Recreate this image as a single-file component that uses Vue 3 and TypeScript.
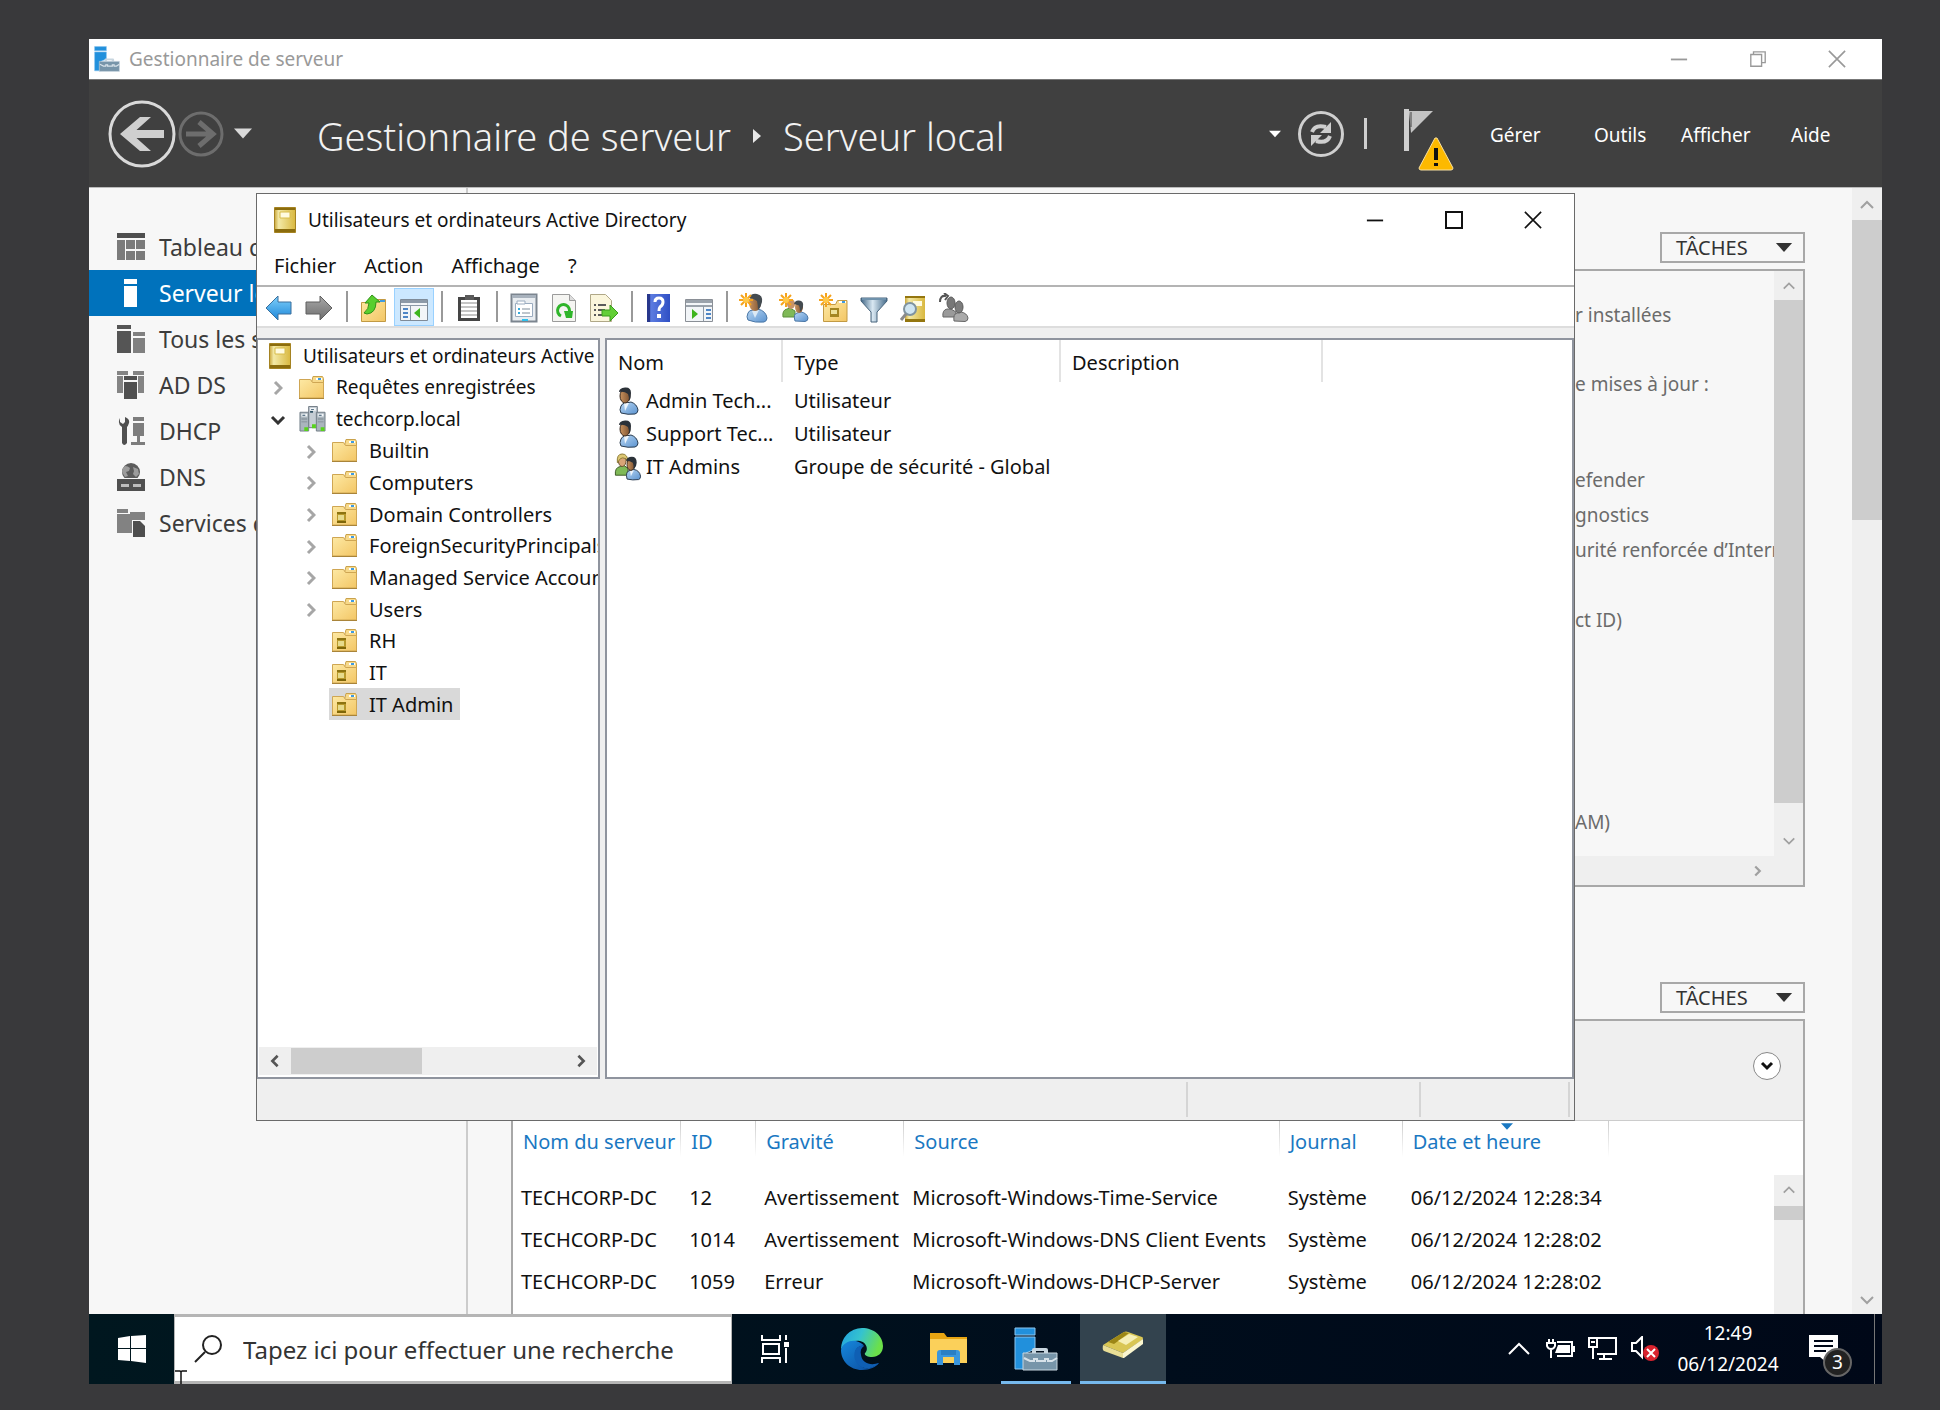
<script setup lang="ts">
interface NavItem { label: string; icon: string; active?: boolean }
interface Tool { icon: string; title: string; active?: boolean }
interface TreeNode { label: string; icon: string; level: number; state: 'open' | 'closed' | 'none'; selected?: boolean }
interface Entry { name: string; type: string; icon: string }
interface EventRow { server: string; id: number; level: string; source: string; log: string; date: string }

const navItems: NavItem[] = [
  { label: 'Tableau de bord', icon: 'dash' },
  { label: 'Serveur local', icon: 'local', active: true },
  { label: 'Tous les serveurs', icon: 'servers' },
  { label: 'AD DS', icon: 'adds' },
  { label: 'DHCP', icon: 'dhcp' },
  { label: 'DNS', icon: 'dns' },
  { label: 'Services de fichiers', icon: 'files' },
]
const menus: string[] = ['Gérer', 'Outils', 'Afficher', 'Aide']
const adMenus: string[] = ['Fichier', 'Action', 'Affichage', '?']

const toolGroups: Tool[][] = [
  [{ icon: 't-back', title: 'Précédent' }, { icon: 't-next', title: 'Suivant' }],
  [{ icon: 't-up', title: 'Dossier parent' }, { icon: 't-tree', title: 'Arborescence', active: true }],
  [{ icon: 't-clip', title: 'Copier' }],
  [{ icon: 't-props', title: 'Propriétés' }, { icon: 't-refresh', title: 'Actualiser' }, { icon: 't-export', title: 'Exporter' }],
  [{ icon: 't-help', title: 'Aide' }, { icon: 't-run', title: 'Volet' }],
  [
    { icon: 't-user', title: 'Nouvel utilisateur' }, { icon: 't-group', title: 'Nouveau groupe' },
    { icon: 't-ou', title: 'Nouvelle unité' }, { icon: 't-filter', title: 'Filtre' },
    { icon: 't-find', title: 'Rechercher' }, { icon: 't-member', title: 'Ajouter au groupe' },
  ],
]

const tree: TreeNode[] = [
  { label: 'Utilisateurs et ordinateurs Active Directory', icon: 'book', level: 0, state: 'none' },
  { label: 'Requêtes enregistrées', icon: 'folder', level: 1, state: 'closed' },
  { label: 'techcorp.local', icon: 'domain', level: 1, state: 'open' },
  { label: 'Builtin', icon: 'folder', level: 2, state: 'closed' },
  { label: 'Computers', icon: 'folder', level: 2, state: 'closed' },
  { label: 'Domain Controllers', icon: 'ou', level: 2, state: 'closed' },
  { label: 'ForeignSecurityPrincipals', icon: 'folder', level: 2, state: 'closed' },
  { label: 'Managed Service Accounts', icon: 'folder', level: 2, state: 'closed' },
  { label: 'Users', icon: 'folder', level: 2, state: 'closed' },
  { label: 'RH', icon: 'ou', level: 2, state: 'none' },
  { label: 'IT', icon: 'ou', level: 2, state: 'none' },
  { label: 'IT Admin', icon: 'ou', level: 2, state: 'none', selected: true },
]
const entries: Entry[] = [
  { name: 'Admin Tech...', type: 'Utilisateur', icon: 'user' },
  { name: 'Support Tec...', type: 'Utilisateur', icon: 'user' },
  { name: 'IT Admins', type: 'Groupe de sécurité - Global', icon: 'group' },
]
const propertyGroups: { cls: string; lines: string[] }[] = [
  { cls: 'g-installed', lines: ['r installées'] },
  { cls: 'g-update', lines: ['e mises à jour :'] },
  { cls: 'g-security', lines: ['efender', 'gnostics', 'urité renforcée d’Internet Explorer', '', 'ct ID)'] },
  { cls: 'g-memory', lines: ['AM)'] },
]
const columns: string[] = ['Nom du serveur', 'ID', 'Gravité', 'Source', 'Journal', 'Date et heure']
const events: EventRow[] = [
  { server: 'TECHCORP-DC', id: 12, level: 'Avertissement', source: 'Microsoft-Windows-Time-Service', log: 'Système', date: '06/12/2024 12:28:34' },
  { server: 'TECHCORP-DC', id: 1014, level: 'Avertissement', source: 'Microsoft-Windows-DNS Client Events', log: 'Système', date: '06/12/2024 12:28:02' },
  { server: 'TECHCORP-DC', id: 1059, level: 'Erreur', source: 'Microsoft-Windows-DHCP-Server', log: 'Système', date: '06/12/2024 12:28:02' },
]
</script>

<template>
  <div class="page">
    <svg class="defs" width="0" height="0" aria-hidden="true">
      <defs>
        <linearGradient id="gFold" x1="0" y1="0" x2="1" y2="1"><stop offset="0" stop-color="#fde9a4" /><stop offset="1" stop-color="#f3c665" /></linearGradient>
        <linearGradient id="gBook" x1="0" y1="0" x2="1" y2="0"><stop offset="0" stop-color="#c9a63a" /><stop offset=".2" stop-color="#f3e9a6" /><stop offset="1" stop-color="#d9b83f" /></linearGradient>
        <linearGradient id="gBlue" x1="0" y1="0" x2="0" y2="1"><stop offset="0" stop-color="#7fd0fb" /><stop offset="1" stop-color="#1d86d8" /></linearGradient>
        <linearGradient id="gGrey" x1="0" y1="0" x2="0" y2="1"><stop offset="0" stop-color="#a8a8a8" /><stop offset="1" stop-color="#6e6e6e" /></linearGradient>
        <linearGradient id="gShirt" x1="0" y1="0" x2="1" y2="1"><stop offset="0" stop-color="#b9d7f3" /><stop offset="1" stop-color="#5b93d0" /></linearGradient>
        <linearGradient id="gSkin" x1="0" y1="0" x2="1" y2="0"><stop offset="0" stop-color="#c9935f" /><stop offset="1" stop-color="#7d5230" /></linearGradient>
        <linearGradient id="gHelp" x1="0" y1="0" x2="1" y2="0"><stop offset="0" stop-color="#2b3f9c" /><stop offset=".2" stop-color="#5b7be0" /><stop offset="1" stop-color="#2f4fc4" /></linearGradient>
        <linearGradient id="gFun" x1="0" y1="0" x2="1" y2="0"><stop offset="0" stop-color="#3f6585" /><stop offset=".45" stop-color="#d9e8f2" /><stop offset="1" stop-color="#456b8a" /></linearGradient>
        <linearGradient id="gEdgeA" x1="0" y1="0" x2="1" y2=".3"><stop offset="0" stop-color="#1f9fe0" /><stop offset=".5" stop-color="#35c3cf" /><stop offset="1" stop-color="#6be04a" /></linearGradient>
        <linearGradient id="gEdgeB" x1="0" y1="0" x2="1" y2="1"><stop offset="0" stop-color="#1688dc" /><stop offset="1" stop-color="#0b4a9c" /></linearGradient>
      </defs>

      <symbol id="folder" viewBox="0 0 25 23"><path d="M14 .5h9.500l1 2v6H12z" fill="#f7d98a" stroke="#c9a24c" /><path d="M17 2h6v2h-6z" fill="#fff" /><path d="M19 2h3v2h-3z" fill="#3f9be0" /><path d="M.5 3.500h11l2 3h11v15.500H.5z" fill="url(#gFold)" stroke="#cfa653" /><path d="M0 22.500h25" stroke="#a9843a" /></symbol>
      <symbol id="ou" viewBox="0 0 25 23"><use href="#folder" width="25" height="23" /><path d="M5 9h9v11H5z" fill="#b8992b" /><path d="M5 9h9v2H5z" fill="#8d7310" /><path d="M6 12h6v5H6z" fill="#e7db8c" /><path d="M5 18h9v2H5z" fill="#7f6608" /></symbol>
      <symbol id="book" viewBox="0 0 22 26"><path d="M.5.5h21v25H.5z" fill="url(#gBook)" stroke="#a58322" /><path d="M1 1h20v2H1zM1 22h20v3H1z" fill="#8b6c0d" /><path d="M6 5h10v6H6z" fill="#fffbe0" stroke="#d8bc4a" /></symbol>
      <symbol id="domain" viewBox="0 0 27 27"><path d="M9.500.5h9v22h-9z" fill="#c5cdd4" stroke="#6f7a83" /><path d="M11 5h3v2h-3z" fill="#2e5063" /><path d="M.5 6.500h9v19.500h-9zM17.500 6.500h9v19.500h-9z" fill="#aab5bd" stroke="#717d86" /><path d="M2 8h6v3H2zM19 8h6v3h-6zM11 2h6v3h-6z" fill="#f4f7f9" /><path d="M3 9h3v1H3zM20 9h3v1h-3zM12 3h3v1h-3z" fill="#2e4f68" /><path d="M2 13h6v1H2zM19 13h6v1h-6zM2 16h6v1H2zM19 16h6v1h-6z" fill="#7c8890" /><path d="M5 22h4v4H5zM22 22h4v4h-4zM13 19h4v4h-4z" fill="#58d31c" /></symbol>
      <symbol id="user" viewBox="0 0 24 28"><path d="M5 26q-2-3 0-7 1-3 5-3l5-1q6 2 7 8 0 3-3 4-7 1-14-1z" fill="url(#gShirt)" stroke="#2a3c50" /><path d="M8 16l1 8 4-8z" fill="#eef5fb" /><ellipse cx="9" cy="9" rx="5" ry="7" fill="url(#gSkin)" stroke="#39281b" /><path d="M3 5q0-4 6-4.500Q15 0 15 6q0 5-2 8 0-5-1-7-4-3-9-2z" fill="#2b3138" /></symbol>
      <symbol id="group" viewBox="0 0 28 29"><path d="M1 23q-1-8 5-9l4-1 4 3v7z" fill="#7fb957" stroke="#3c5a26" /><ellipse cx="8" cy="8" rx="4" ry="6" fill="#d9a577" stroke="#6b5230" /><path d="M3 10q-1-9 5-9t6 9l-2-4q-4-2-6 0z" fill="#dcc672" stroke="#8d7a35" /><path d="M13 27q-2-8 3-9l4-1q6 1 7 7 0 3-2 3.500-6 1-12-.5z" fill="url(#gShirt)" stroke="#2a3c50" /><path d="M16 18l1 6 3-6z" fill="#eef5fb" /><ellipse cx="17" cy="12" rx="4" ry="6" fill="url(#gSkin)" stroke="#39281b" /><path d="M12 8q1-4 6-4t5 6q0 4-3 7 0-5-1-7-3-2-7-2z" fill="#2b3138" /></symbol>
      <symbol id="star" viewBox="0 0 14 14"><path d="M7 0v14M0 7h14M2 2l10 10M12 2L2 12" stroke="#f5a31c" stroke-width="2" /><circle cx="7" cy="7" r="3" fill="#ffc84a" /></symbol>

      <symbol id="t-back" viewBox="0 0 30 30"><path d="M2 15L14 3v6h13v12H14v6z" fill="url(#gBlue)" stroke="#3a6f9c" /></symbol>
      <symbol id="t-next" viewBox="0 0 30 30"><path d="M28 15L16 3v6H2v12h14v6z" fill="url(#gGrey)" stroke="#5e5e5e" /></symbol>
      <symbol id="t-up" viewBox="0 0 30 30"><path d="M2.500 9.500h12l3-3h9v22h-24z" fill="url(#gFold)" stroke="#c29a44" /><path d="M21 7h5v2h-5z" fill="#3f9be0" /><path d="M5 20q5-4 5-10H6l7-8 8 7h-4q0 11-9 12z" fill="#58cf2e" stroke="#2f9216" /></symbol>
      <symbol id="t-tree" viewBox="0 0 30 30"><path d="M1.500 6.500h27v21h-27z" fill="#f2f5f8" stroke="#7f8b98" /><path d="M2 7h26v3H2zM2 12h26v1H2z" fill="#8c99a8" /><path d="M11 13h1v14h-1z" fill="#8c99a8" /><path d="M4 15h5v2H4zM4 19h5v2H4zM4 23h5v2H4z" fill="#4f86c6" /><path d="M21 15v10l-6-5z" fill="#3fb51f" /></symbol>
      <symbol id="t-clip" viewBox="0 0 30 30"><path d="M4 4h22v24H4z" fill="#454545" /><path d="M7 7h16v18H7z" fill="#fff" /><path d="M11 2h9v5h-9z" fill="#5b5b5b" /><path d="M7 10h16M7 14h16M7 18h16M7 22h16" stroke="#8b8b8b" /></symbol>
      <symbol id="t-props" viewBox="0 0 30 30"><path d="M2.500 1.500h25v27h-25z" fill="#e9edf1" stroke="#7c858f" stroke-width="2" /><path d="M3 2h24v3H3z" fill="#a8b2bd" /><path d="M6.500 10.500h17v13h-17z" fill="#fff" stroke="#9aabbf" /><path d="M8 8h8v3H8z" fill="#fff" stroke="#9aabbf" /><path d="M9 15h2v2H9zM9 19h2v2H9z" fill="#33a9dc" /><path d="M13 16h8M13 20h8" stroke="#7f8d9b" /><path d="M13 26h6v2h-6z" fill="#2ec1ee" /></symbol>
      <symbol id="t-refresh" viewBox="0 0 30 30"><path d="M3.500 1.500h17l6 6v21h-23z" fill="#f5f5f2" stroke="#9b9b9b" /><path d="M20.500 1.500v6h6" fill="#ddd" stroke="#9b9b9b" /><path d="M12 23a6 6 0 1 1 8-3" fill="none" stroke="#2fb52a" stroke-width="3" /><path d="M15 18h9l-1 7h-6z" fill="#2fb52a" /></symbol>
      <symbol id="t-export" viewBox="0 0 30 30"><path d="M1.500 1.500h15l6 6v21h-21z" fill="#fbf6dc" stroke="#b0a888" /><path d="M5 12h2M5 17h2M5 22h2M9 12h8M9 17h7M9 22h7" stroke="#5b5b5b" stroke-width="2" /><path d="M13 17h8v-5l8 8-8 8v-5h-8z" fill="#63cf37" stroke="#3a9d1d" /></symbol>
      <symbol id="t-help" viewBox="0 0 30 30"><path d="M3 1h23v28H3z" fill="url(#gHelp)" /><path d="M3 1h3v28H3z" fill="#27378c" /><path d="M11 9q0-4 4-4t4 4q0 3-3 5-1 1-1 4" fill="none" stroke="#fff" stroke-width="3" /><path d="M13 21h4v4h-4z" fill="#fff" /></symbol>
      <symbol id="t-run" viewBox="0 0 30 30"><path d="M1.500 6.500h27v22h-27z" fill="#f2f5f8" stroke="#8a8f96" /><path d="M2 7h26v3H2zM2 12h26v2H2z" fill="#9aa2ab" /><path d="M19 13h1v15h-1z" fill="#8c99a8" /><path d="M22 16h5v2h-5zM22 20h5v2h-5zM22 24h5v2h-5z" fill="#4f86c6" /><path d="M8 16v10l6-5z" fill="#3fb51f" /></symbol>
      <symbol id="t-user" viewBox="0 0 30 30"><path d="M9 27q-2-3 0-7 1-3 5-3l5-1q8 2 9 9 0 3-3 4-9 1-16-2z" fill="url(#gShirt)" stroke="#4a76a5" /><path d="M13 18l3 7 4-8z" fill="#dbe9f5" /><ellipse cx="16" cy="10" rx="6" ry="8" fill="url(#gSkin)" /><path d="M10 5q2-5 8-4 6 1 5 8-1 5-4 8 0-5-1-9-4-3-8-3z" fill="#444b50" /><use href="#star" width="14" height="14" /></symbol>
      <symbol id="t-group" viewBox="0 0 30 30"><path d="M4 24q-1-7 4-8l3-1 5 3v6z" fill="#7fb957" stroke="#5d8f3c" /><ellipse cx="12" cy="11" rx="4" ry="5" fill="#c99468" /><path d="M16 28q-2-7 2-8l4-1q6 1 7 6 0 3-3 3.500z" fill="url(#gShirt)" stroke="#4a76a5" /><ellipse cx="20" cy="14" rx="4" ry="6" fill="url(#gSkin)" /><path d="M15 11q1-4 5-3.500 5 .5 4 6-1 4-3 5 0-4-1-6-2-1-5-1.500z" fill="#444b50" /><use href="#star" width="14" height="14" /></symbol>
      <symbol id="t-ou" viewBox="0 0 30 30"><path d="M4.500 11.500h12l2-4h9.500v21h-23.500z" fill="url(#gFold)" stroke="#c29a44" /><path d="M20 8h7v2h-7z" fill="#fff" /><path d="M23 8h3v2h-3z" fill="#3f9be0" /><path d="M11 15h9v9h-9z" fill="#a48621" /><path d="M12 17h6v4h-6z" fill="#ede19a" /><use href="#star" width="14" height="14" /></symbol>
      <symbol id="t-filter" viewBox="0 0 30 30"><path d="M2 5h26v3L18 19v10h-6V19L2 8z" fill="url(#gFun)" stroke="#48657d" /><path d="M3 5h24v2H3z" fill="#6f92ac" /></symbol>
      <symbol id="t-find" viewBox="0 0 30 30"><path d="M6 3h20v26H6z" fill="url(#gBook)" /><path d="M6 3h20v2H6zM6 26h20v3H6z" fill="#94760f" /><path d="M14 8h9v5h-9z" fill="#fffbe0" /><circle cx="11" cy="16" r="6" fill="#cfe5f2" stroke="#7f93a0" stroke-width="2" /><path d="M7 21l-5 6" stroke="#8a8a8a" stroke-width="3" /></symbol>
      <symbol id="t-member" viewBox="0 0 30 30"><path d="M1 9q0-7 6-6M5 0l4 3-3 4" fill="none" stroke="#555" stroke-width="2" /><path d="M4 24q-1-7 4-8h4l5 3v5z" fill="#9a9a9a" stroke="#666" /><ellipse cx="12" cy="10" rx="4" ry="6" fill="#777" stroke="#5a5a5a" /><path d="M15 28q-1-7 3-8l4-1q6 1 7 6 0 3-3 3.500z" fill="#aaa" stroke="#666" /><ellipse cx="20" cy="14" rx="4" ry="6" fill="#7c7c7c" stroke="#5a5a5a" /></symbol>

      <symbol id="dash" viewBox="0 0 28 28"><path d="M0 0h28v5H0z" fill="#4f4f4f" /><path d="M0 7h8v20H0zM9 7h9v9H9zM19 7h9v9h-9zM9 18h9v9H9zM19 18h9v9h-9z" fill="#7b7b7b" /></symbol>
      <symbol id="local" viewBox="0 0 28 28"><path d="M7 0h13v5H7zM7 7h13v21H7z" fill="#fff" /></symbol>
      <symbol id="servers" viewBox="0 0 28 28"><path d="M0 0h14v4H0zM0 6h14v22H0z" fill="#555" /><path d="M16 7h12v4H16zM16 13h12v15H16z" fill="#808080" /></symbol>
      <symbol id="adds" viewBox="0 0 28 28"><path d="M0 0h11v4H0zM0 5h6v17H0zM16 0h11v4H16zM21 5h6v17h-6z" fill="#848484" /><path d="M7 5h13v4H7zM7 11h13v17H7z" fill="#505050" /></symbol>
      <symbol id="dhcp" viewBox="0 0 28 28"><path d="M3 1v4l3 2 2-2V0q5 2 4 6-1 3-2 4v16q-3 4-5 0V10Q0 7 3 1z" fill="#505050" /><path d="M16 0h11v4H16zM16 6h11v13H16zM20 19h3v6h-3zM14 25h14v3H14z" fill="#7d7d7d" /></symbol>
      <symbol id="dns" viewBox="0 0 28 28"><circle cx="14" cy="9" r="9" fill="#5c5c5c" /><path d="M8 3q3 0 5 2l-1 3-3 1 2 4-3 1-3-5q0-4 3-6zM16 4l5 2 1 5-3 3-3-3 1-3z" fill="#9c9c9c" /><path d="M0 16h28v12H0z" fill="#505050" /><path d="M0 15.500h28" stroke="#f7f7f7" /><path d="M4 21h8v3H4zM16 21h8v3h-8z" fill="#bdbdbd" /></symbol>
      <symbol id="files" viewBox="0 0 28 28"><path d="M0 0h11v4H0zM0 5h13V3h15v8H15v13H0z" fill="#828282" /><path d="M16 12h7l5 5v11H16z" fill="#4e4e4e" /></symbol>

      <symbol id="toolbox" viewBox="0 0 44 44"><path d="M1 1h20v7H1zM1 10h20v12l-9 4v16H1z" fill="#2190dc" /><path d="M1 1h20v7H1zM1 10h20v12l-9 4v16H1z" fill="none" stroke="#8cc6f0" /><path d="M18 26v-3q0-2 2-2h12q2 0 2 2v3h-4v-2h-8v2z" fill="#c8d6df" /><path d="M9 26h34v17H9z" fill="#7795a9" stroke="#c8d6df" /><path d="M10 31l6 3h4v-2h3v2h8v-2h3v2h4l5-3" fill="none" stroke="#d7e2e9" stroke-width="2" /></symbol>
      <symbol id="c-up" viewBox="0 0 16 10"><path d="M2 8l6-6 6 6" fill="none" stroke="currentColor" stroke-width="2" /></symbol>
      <symbol id="c-down" viewBox="0 0 16 10"><path d="M2 2l6 6 6-6" fill="none" stroke="currentColor" stroke-width="2" /></symbol>
      <symbol id="c-right" viewBox="0 0 10 16"><path d="M2 2l6 6-6 6" fill="none" stroke="currentColor" stroke-width="3" /></symbol>
      <symbol id="c-left" viewBox="0 0 10 16"><path d="M8 2L2 8l6 6" fill="none" stroke="currentColor" stroke-width="3" /></symbol>
      <symbol id="w-min" viewBox="0 0 20 20"><path d="M1 10.500h18" stroke="currentColor" stroke-width="2" /></symbol>
      <symbol id="w-max" viewBox="0 0 20 20"><path d="M2 2h16v16H2z" fill="none" stroke="currentColor" stroke-width="2" /></symbol>
      <symbol id="w-restore" viewBox="0 0 20 20"><path d="M2 5h12v13H2zM5 5V2h13v12h-4" fill="none" stroke="currentColor" stroke-width="1.500" /></symbol>
      <symbol id="w-close" viewBox="0 0 20 20"><path d="M1 1l18 18M19 1L1 19" stroke="currentColor" stroke-width="1.800" /></symbol>
      <symbol id="caret" viewBox="0 0 18 10"><path d="M0 0h18l-9 10z" fill="currentColor" /></symbol>
    </svg>

    <div class="screen">
      <main class="manager">
        <div class="titlebar">
          <svg class="title-icon" width="26" height="26"><use href="#toolbox" /></svg>
          <span class="title-text">Gestionnaire de serveur</span>
          <div class="win-buttons faded">
            <button type="button" aria-label="Réduire"><svg width="18" height="18"><use href="#w-min" /></svg></button>
            <button type="button" aria-label="Restaurer"><svg width="18" height="18"><use href="#w-restore" /></svg></button>
            <button type="button" aria-label="Fermer"><svg width="18" height="18"><use href="#w-close" /></svg></button>
          </div>
        </div>

        <header class="banner">
          <button type="button" class="nav-back" aria-label="Précédent">
            <svg width="68" height="68" viewBox="0 0 68 68" fill="none"><circle cx="34" cy="34" r="32" stroke="#d9d9d9" stroke-width="3" /><path d="M24 34h32" stroke="#cfcfcf" stroke-width="8" /><path d="M12 34l20-17h11L24 34l19 17H32z" fill="#cfcfcf" /></svg>
          </button>
          <button type="button" class="nav-next" aria-label="Suivant">
            <svg width="46" height="46" viewBox="0 0 46 46" fill="none"><circle cx="23" cy="23" r="21" stroke="#6d6d6d" stroke-width="3" /><path d="M8 23h26M21 11l14 12-14 12" stroke="#6d6d6d" stroke-width="5" /></svg>
          </button>
          <button type="button" class="nav-list" aria-label="Historique"><svg width="18" height="11"><use href="#caret" /></svg></button>
          <h1 class="crumbs">Gestionnaire de serveur <svg class="crumb-arrow" width="8" height="14" viewBox="0 0 8 14"><path d="M0 0l8 7-8 7z" fill="#e8e8e8" /></svg> Serveur local</h1>
          <div class="banner-right">
            <svg width="12" height="8"><use href="#caret" /></svg>
            <button type="button" class="refresh" aria-label="Actualiser">
              <svg width="46" height="46" viewBox="0 0 46 46" fill="none"><circle cx="23" cy="23" r="21.500" stroke="#cfcfcf" stroke-width="3" /><path d="M14 21q3-8 14-5M32 25q-3 8-14 5" stroke="#cfcfcf" stroke-width="4" /><path d="M33 11v11H22zM13 35V24h11z" fill="#cfcfcf" /></svg>
            </button>
            <span class="bar"></span>
            <button type="button" class="flag" aria-label="Notifications">
              <svg width="54" height="64" viewBox="0 0 54 64"><path d="M2 1h5v42H2z" fill="#cfcfcf" /><path d="M7 3h24L9 25z" fill="#c4c4c4" /><path d="M9 4v15" stroke="#404040" /><path d="M35 30l16 30q0 2-2 2H19q-2 0-2-2l16-30z" fill="#fdb900" stroke="#f7dfa0" /><path d="M34 40v12M34 55v3" stroke="#111" stroke-width="4" /></svg>
            </button>
            <nav class="menu">
              <button v-for="m in menus" :key="m" type="button">{{ m }}</button>
            </nav>
          </div>
        </header>

        <div class="body">
          <nav class="sidebar">
            <a v-for="n in navItems" :key="n.label" href="#" class="nav-item" :class="{ active: n.active }">
              <svg width="28" height="28"><use :href="'#' + n.icon" /></svg>{{ n.label }}
            </a>
          </nav>

          <div class="content">
            <button type="button" class="tasks">TÂCHES<svg width="18" height="9"><use href="#caret" /></svg></button>
            <section class="properties">
              <div class="prop-row">
                <div class="prop-text">
                  <div v-for="g in propertyGroups" :key="g.cls" :class="g.cls">
                    <p v-for="(l, i) in g.lines" :key="i">{{ l }}</p>
                  </div>
                </div>
                <div class="vscroll">
                  <svg width="14" height="10"><use href="#c-up" /></svg>
                  <div class="thumb"></div>
                  <svg class="low" width="14" height="10"><use href="#c-down" /></svg>
                </div>
              </div>
              <div class="hscroll"><svg width="9" height="12"><use href="#c-right" /></svg></div>
            </section>

            <button type="button" class="tasks second">TÂCHES<svg width="18" height="9"><use href="#caret" /></svg></button>
            <section class="events">
              <div class="events-head">
                <button type="button" class="expand" aria-label="Développer"><svg width="14" height="10" viewBox="0 0 14 10"><path d="M2 2l5 5 5-5" fill="none" stroke="#111" stroke-width="3" /></svg></button>
              </div>
              <div class="events-body">
                <table>
                  <colgroup><col class="c1" /><col class="c2" /><col class="c3" /><col class="c4" /><col class="c5" /><col class="c6" /></colgroup>
                  <thead>
                    <tr><th v-for="c in columns" :key="c" scope="col">{{ c }}<svg v-if="c === 'Date et heure'" class="sort" width="12" height="7"><use href="#caret" /></svg></th></tr>
                  </thead>
                  <tbody>
                    <tr v-for="e in events" :key="e.id">
                      <td>{{ e.server }}</td><td>{{ e.id }}</td><td>{{ e.level }}</td><td>{{ e.source }}</td><td>{{ e.log }}</td><td>{{ e.date }}</td>
                    </tr>
                  </tbody>
                </table>
                <div class="vscroll small">
                  <svg width="14" height="10"><use href="#c-up" /></svg>
                  <div class="thumb"></div>
                </div>
              </div>
            </section>
          </div>

          <div class="vscroll page-scroll">
            <svg width="16" height="10"><use href="#c-up" /></svg>
            <div class="thumb"></div>
            <svg class="low" width="16" height="10"><use href="#c-down" /></svg>
          </div>
        </div>
      </main>

      <section class="ad" aria-label="Utilisateurs et ordinateurs Active Directory">
        <div class="ad-title">
          <svg width="22" height="26"><use href="#book" /></svg>
          <span>Utilisateurs et ordinateurs Active Directory</span>
          <div class="win-buttons">
            <button type="button" aria-label="Réduire"><svg width="18" height="18"><use href="#w-min" /></svg></button>
            <button type="button" aria-label="Agrandir"><svg width="20" height="20"><use href="#w-max" /></svg></button>
            <button type="button" aria-label="Fermer"><svg width="18" height="18"><use href="#w-close" /></svg></button>
          </div>
        </div>
        <div class="ad-menu"><button v-for="m in adMenus" :key="m" type="button">{{ m }}</button></div>
        <div class="toolbar">
          <div v-for="(g, i) in toolGroups" :key="i" class="tool-group">
            <button v-for="t in g" :key="t.icon" type="button" :aria-label="t.title" :class="{ on: t.active }"><svg width="30" height="30"><use :href="'#' + t.icon" /></svg></button>
          </div>
        </div>
        <div class="panes">
          <div class="tree">
            <ul>
              <li v-for="n in tree" :key="n.label" :class="['lv' + n.level, { selected: n.selected }]">
                <span v-if="n.level" class="twisty" :class="n.state">
                  <svg v-if="n.state === 'closed'" width="10" height="16"><use href="#c-right" /></svg>
                  <svg v-if="n.state === 'open'" width="16" height="10" viewBox="0 0 16 10"><path d="M2 2l6 6 6-6" fill="none" stroke="#333" stroke-width="3" /></svg>
                </span>
                <span class="node"><span class="node-icon"><svg :width="n.icon === 'domain' ? 27 : n.icon === 'book' ? 22 : 25" :height="n.icon === 'domain' || n.icon === 'book' ? 26 : 23"><use :href="'#' + n.icon" /></svg></span>{{ n.label }}</span>
              </li>
            </ul>
            <div class="tree-scroll">
              <svg width="10" height="14"><use href="#c-left" /></svg>
              <div class="thumb"></div>
              <svg width="10" height="14"><use href="#c-right" /></svg>
            </div>
          </div>
          <div class="list">
            <table>
              <colgroup><col class="l1" /><col class="l2" /><col class="l3" /></colgroup>
              <thead><tr><th scope="col">Nom</th><th scope="col">Type</th><th scope="col">Description</th></tr></thead>
              <tbody>
                <tr v-for="e in entries" :key="e.name">
                  <td><span class="entry"><svg width="28" height="28"><use :href="'#' + e.icon" /></svg>{{ e.name }}</span></td><td>{{ e.type }}</td><td></td>
                </tr>
              </tbody>
            </table>
          </div>
        </div>
        <div class="status"><span class="s1"></span><span class="s2"></span><span class="s3"></span></div>
      </section>

      <footer class="taskbar">
        <button type="button" class="start" aria-label="Démarrer">
          <svg width="28" height="28" viewBox="0 0 28 28"><path d="M0 3l12-2v12H0zM13 1l15-1v13H13zM0 14h12v12L0 25zM13 14h15v14l-15-2z" fill="#fff" /></svg>
        </button>
        <label class="search">
          <svg width="30" height="30" viewBox="0 0 30 30" fill="none" stroke="#222" stroke-width="2"><circle cx="19" cy="11" r="9" /><path d="M12 18L2 28" /></svg>
          <input type="text" placeholder="Tapez ici pour effectuer une recherche" aria-label="Rechercher" />
          <svg class="ibeam" width="12" height="14" viewBox="0 0 12 14"><path d="M0 1h5l1 1 1-1h5M6 2v12" fill="none" stroke="#111" stroke-width="1.500" /></svg>
        </label>
        <div class="apps">
          <button type="button" aria-label="Affichage des tâches">
            <svg width="30" height="30" viewBox="0 0 30 30" fill="none" stroke="#fff" stroke-width="2"><path d="M2 1v5h18V1M2 29v-5h18v5M3 10h16v10H3z" /><path d="M26 1v5M26 14v15" /><path d="M24 8h5v5h-5z" fill="#fff" stroke="none" /></svg>
          </button>
          <button type="button" aria-label="Microsoft Edge">
            <svg width="44" height="44" viewBox="0 0 44 44"><path d="M1 23A21 21 0 0 1 22 1c12 0 21 8 21 18 0 7-5 11-11 11-5 0-8-2-7-4 4-4 1-11-5-12C11 13 3 17 1 23z" fill="url(#gEdgeA)" /><path d="M1 23c2-7 9-10 15-9 4 1 7 3 8 5-5-1-9 3-9 9 0 9 9 16 17 12 3-1 6-4 7-4-3 4-9 7-17 7C10 43 1 34 1 23z" fill="url(#gEdgeB)" /><path d="M15 24c-3 9 4 19 15 17 4-1 7-3 9-5-9 3-17 0-18-8-1-4 0-7 3-9-4-1-8 1-9 5z" fill="#0f5fb4" /></svg>
          </button>
          <button type="button" aria-label="Explorateur de fichiers">
            <svg width="38" height="34" viewBox="0 0 38 34"><path d="M0 1h14l3 4h20v6H0z" fill="#e8a512" /><path d="M0 7h37v24H0z" fill="#fbd05a" /><path d="M7 33V21q0-3 3-3h17q3 0 3 3v12h-6v-8H13v8z" fill="#3a96dd" /><path d="M11 18h15v5H11z" fill="#2b7fc4" /></svg>
          </button>
          <button type="button" class="running" aria-label="Gestionnaire de serveur"><svg width="44" height="44"><use href="#toolbox" /></svg></button>
          <button type="button" class="running current" aria-label="Active Directory">
            <svg width="42" height="28" viewBox="0 0 42 28"><path d="M1 14L22 1q2-1 4 0l14 5q2 1 0 3L21 22z" fill="#d9c654" /><path d="M6 11L22 1l5 1L12 13z" fill="#9c8616" /><path d="M16 10l11-7 9 3-12 8z" fill="#f6efb6" /><path d="M1 14l20 8v5L2 20q-2-1-1-6z" fill="#e9de96" /><path d="M21 22L41 8v5L22 27h-1z" fill="#fbf6cf" /></svg>
          </button>
        </div>
        <div class="tray">
          <button type="button" aria-label="Icônes cachées"><svg width="22" height="14" viewBox="0 0 22 14"><path d="M1 12L11 2l10 10" fill="none" stroke="#fff" stroke-width="2" /></svg></button>
          <button type="button" aria-label="Batterie"><svg width="30" height="22" viewBox="0 0 30 22" fill="none" stroke="#fff" stroke-width="2"><path d="M11 4h15v14H11M28 8v6M3 1v4M7 1v4M1 5h8v3q-1 3-4 3T1 8zM5 11v9" /><path d="M12 7h12v8H9z" fill="#fff" stroke="none" /></svg></button>
          <button type="button" aria-label="Réseau"><svg width="30" height="24" viewBox="0 0 30 24" fill="none" stroke="#fff" stroke-width="2"><path d="M9 1h19v16H9M1 1h8v9H1zM5 10v12M16 17v5M11 22h13" /><path d="M3 4h4v2H3z" fill="#fff" stroke="none" /></svg></button>
          <button type="button" aria-label="Volume"><svg width="30" height="26" viewBox="0 0 30 26"><path d="M2 7h4l6-6v20l-6-6H2z" fill="none" stroke="#fff" stroke-width="2" /><circle cx="21" cy="17" r="8" fill="#d9232e" /><path d="M17 13l8 8M25 13l-8 8" stroke="#fff" stroke-width="2" /></svg></button>
          <div class="clock"><span>12:49</span><span>06/12/2024</span></div>
          <button type="button" class="notif" aria-label="Notifications">
            <svg width="30" height="28" viewBox="0 0 30 28"><path d="M0 0h29v22H18v6l-7-6H0z" fill="#fff" /><path d="M5 6h19M5 11h19M5 16h12" stroke="#000818" stroke-width="2" /></svg>
            <span class="count">3</span>
          </button>
          <span class="peek"></span>
        </div>
      </footer>
    </div>
  </div>
</template>

<style>
body { background: #39393b; }
</style>

<style scoped>
* { box-sizing: border-box; }
.page { min-height: 100vh; padding: 39px 58px 26px 89px; display: flex; background: #39393b; font-family: "Noto Sans", "Open Sans", sans-serif; font-size: 19px; color: #111; }
.defs { position: absolute; }
.screen { position: relative; flex: 1; min-width: 0; display: flex; flex-direction: column; overflow: hidden; }
button { font: inherit; color: inherit; background: none; border: 0; padding: 0; margin: 0; }
svg { flex: none; display: block; }
p, h1, ul { margin: 0; padding: 0; }
table { border-collapse: collapse; table-layout: fixed; font-size: 20px; }
th { font-weight: 400; text-align: left; }
th, td { white-space: nowrap; padding: 0; }

.manager { flex: 1; display: flex; flex-direction: column; background: #f7f7f7; }
.titlebar { height: 40px; display: flex; align-items: center; background: #fff; padding: 0 4px 0 5px; color: #999; }
.title-text { margin-left: 9px; }
.win-buttons { margin-left: auto; display: flex; padding-right: 2px; color: #111; }
.win-buttons button { width: 79px; height: 36px; display: flex; align-items: center; justify-content: center; }
.win-buttons.faded { color: #999; }

.banner { height: 109px; display: flex; align-items: center; background: #404040; border-top: 1px solid #777; border-bottom: 1px solid #bbb; color: #fff; padding: 0 47px 0 19px; }
.nav-next { margin-left: 2px; }
.nav-list { margin-left: 10px; color: #d9d9d9; }
.crumbs { margin-left: 65px; padding-top: 4px; display: flex; align-items: center; gap: 22px; font-size: 38px; font-weight: 300; line-height: 48px; color: #f2f2f2; white-space: nowrap; }
.banner-right { margin-left: auto; display: flex; align-items: center; }
.refresh { margin-left: 17px; }
.bar { width: 3px; height: 31px; margin-left: 20px; background: #cfcfcf; }
.flag { margin: 12px 34px 0 35px; }
.menu { display: grid; grid-template-columns: 104px 87px 110px 44px; padding-top: 2px; }
.menu button { text-align: left; }

.body { flex: 1; display: flex; }
.sidebar { width: 379px; border-right: 2px solid #ccc; padding-top: 36px; }
.nav-item { height: 46px; display: flex; align-items: center; gap: 14px; padding-left: 28px; color: #3c3c3c; font-size: 23px; text-decoration: none; white-space: nowrap; }
.active { background: #0072bc; color: #fff; }
.content { flex: 1; min-width: 0; display: flex; flex-direction: column; padding: 44px 47px 0 43px; }
.tasks { align-self: flex-end; width: 145px; height: 31px; border: 2px solid #a8a8a8; display: flex; align-items: center; justify-content: space-between; padding: 0 10px 0 14px; color: #333; font-size: 20px; }
.second { margin-top: 95px; }
.properties { margin-top: 6px; border: 2px solid #a8a8a8; color: #6b6b6b; }
.prop-row { display: flex; justify-content: flex-end; }
.prop-text { width: 199px; height: 585px; overflow: hidden; }
.prop-text p { height: 35px; line-height: 35px; white-space: nowrap; }
.g-installed { margin-top: 27px; }
.g-update { margin-top: 34px; }
.g-security { margin-top: 61px; }
.g-memory { margin-top: 167px; }
.vscroll { width: 29px; background: #efefef; display: flex; flex-direction: column; align-items: center; padding-top: 10px; color: #a0a0a0; }
.vscroll .thumb { width: 100%; height: 503px; margin-top: 9px; background: #cdcdcd; }
.low { margin-top: 33px; }
.hscroll { height: 29px; background: #efefef; display: flex; align-items: center; justify-content: flex-end; padding-right: 41px; color: #a0a0a0; }
.page-scroll { width: 30px; padding-top: 12px; }
.page-scroll .thumb { height: 300px; margin-top: 10px; }
.page-scroll .low { margin-top: auto; margin-bottom: 9px; }

.events { flex: 1; display: flex; flex-direction: column; margin-top: 6px; border: 2px solid #a8a8a8; border-bottom: 0; background: #fff; }
.events-head { height: 100px; background: #efefef; border-bottom: 1px solid #ccc; display: flex; align-items: center; justify-content: flex-end; padding-right: 22px; }
.expand { width: 28px; height: 28px; margin-bottom: 10px; border: 1px solid #888; border-radius: 50%; background: #fff; display: flex; align-items: center; justify-content: center; }
.events-body { flex: 1; display: flex; justify-content: space-between; }
.events table { width: 1096px; align-self: flex-start; }
.c1 { width: 168px; } .c2 { width: 75px; } .c3 { width: 148px; } .c4 { width: 375px; } .c5 { width: 123px; } .c6 { width: 206px; }
.events th { position: relative; height: 56px; vertical-align: top; line-height: 42px; padding-left: 10px; color: #1a78c2; background: linear-gradient(#ccc, #fff) no-repeat right top / 1px 36px; }
.sort { position: absolute; left: 98px; top: 2px; color: #1a78c2; }
.events td { height: 42px; line-height: 42px; padding-left: 8px; }
.small { margin-top: 54px; }
.small .thumb { height: 14px; margin-top: 11px; }

.ad { position: absolute; left: 167px; right: 307px; top: 154px; bottom: 263px; display: flex; flex-direction: column; background: #fff; border: 1px solid #6a6a6a; }
.ad-title { height: 52px; display: flex; align-items: center; gap: 12px; padding-left: 17px; }
.ad-menu { height: 41px; display: flex; align-items: center; gap: 28px; padding-left: 17px; border-bottom: 2px solid #b4b4b4; font-size: 20px; }
.toolbar { height: 41px; display: flex; align-items: center; padding-left: 2px; border-bottom: 2px solid #ddd; }
.tool-group { display: flex; align-items: center; }
.tool-group + .tool-group::before { content: ""; width: 2px; height: 31px; margin: 0 6px 0 7px; background: #999; }
.tool-group button { width: 40px; height: 38px; display: flex; align-items: center; justify-content: center; padding-top: 2px; }
.tool-group .on { background: #cce8ff; border: 1px solid #99d1ff; }
.panes { flex: 1; min-height: 0; display: flex; gap: 5px; padding-top: 10px; background: #efefef; }
.tree { width: 343px; display: flex; flex-direction: column; justify-content: space-between; background: #fff; border: 2px solid #8f949e; border-left-width: 1px; overflow: hidden; font-size: 20px; }
.tree ul { height: 380px; display: grid; grid-auto-rows: 1fr; list-style: none; }
.tree li { display: flex; align-items: center; white-space: nowrap; min-height: 0; }
.node { height: 100%; display: flex; align-items: center; padding: 0 7px 0 3px; }
.node-icon { width: 37px; }
.lv0 { padding-left: 8px; font-size: 19px; }
.lv0 .node-icon { width: 34px; }
.lv1 { padding-left: 10px; font-size: 19px; }
.lv2 { padding-left: 43px; }
.twisty { width: 28px; display: flex; justify-content: center; padding: 2px 8px 0 0; color: #a6a6a6; }
.selected .node { background: #d9d9d9; }
.tree-scroll { height: 28px; margin: 0 1px 2px; display: flex; align-items: center; justify-content: space-between; padding: 0 11px; background: #efefef; color: #555; }
.tree-scroll .thumb { width: 131px; height: 26px; margin: 0 auto 0 11px; background: #cdcdcd; }
.list { flex: 1; border: 2px solid #8f949e; background: #fff; }
.list table { width: 716px; }
.l1 { width: 176px; } .l2 { width: 278px; } .l3 { width: 262px; }
.list th { height: 44px; padding-left: 11px; background: linear-gradient(#e3e3e3, #e3e3e3) no-repeat right top / 2px 42px; }
.list td { height: 33px; padding-left: 11px; }
.entry { display: flex; align-items: center; }
.list td:first-child { padding-left: 7px; }
.entry svg { margin-right: 4px; }
.status { height: 41px; display: flex; justify-content: flex-end; align-items: center; padding-right: 4px; background: #efefef; }
.status span { height: 35px; border-right: 2px solid #d5d5d5; }
.s2 { width: 233px; } .s3 { width: 149px; }

.taskbar { height: 70px; display: flex; background: linear-gradient(90deg, #00171f, #000d1c 60%, #000818); color: #fff; }
.start { width: 85px; display: flex; align-items: center; justify-content: center; }
.search { position: relative; width: 558px; display: flex; align-items: center; gap: 20px; padding-left: 18px; background: #fff; border: 3px solid #b5b5b5; border-width: 3px 1px; }
.search input { flex: 1; min-width: 0; height: 40px; border: 0; padding: 0; background: none; font-family: inherit; font-size: 24px; }
.search input::placeholder { color: #333; opacity: 1; }
.ibeam { position: absolute; left: 0; bottom: -3px; }
.apps { display: flex; gap: 1px; }
.apps button { width: 86px; display: flex; align-items: center; justify-content: center; }
.running { background: linear-gradient(#76b9ed, #76b9ed) no-repeat center bottom / 70px 3px; }
.apps .current { background-color: #33434e; background-size: 100% 3px; padding-bottom: 8px; }
.tray { margin-left: auto; display: flex; }
.tray button { width: 42px; display: flex; align-items: center; justify-content: center; }
.clock { width: 124px; display: flex; flex-direction: column; align-items: center; padding-top: 4px; line-height: 31px; }
.tray .notif { position: relative; width: 68px; }
.count { position: absolute; left: 33px; top: 34px; width: 29px; height: 29px; border: 2px solid #666; border-radius: 50%; background: #222; line-height: 25px; text-align: center; }
.peek { width: 1px; margin: 0 7px 0 16px; background: #777; }
</style>
